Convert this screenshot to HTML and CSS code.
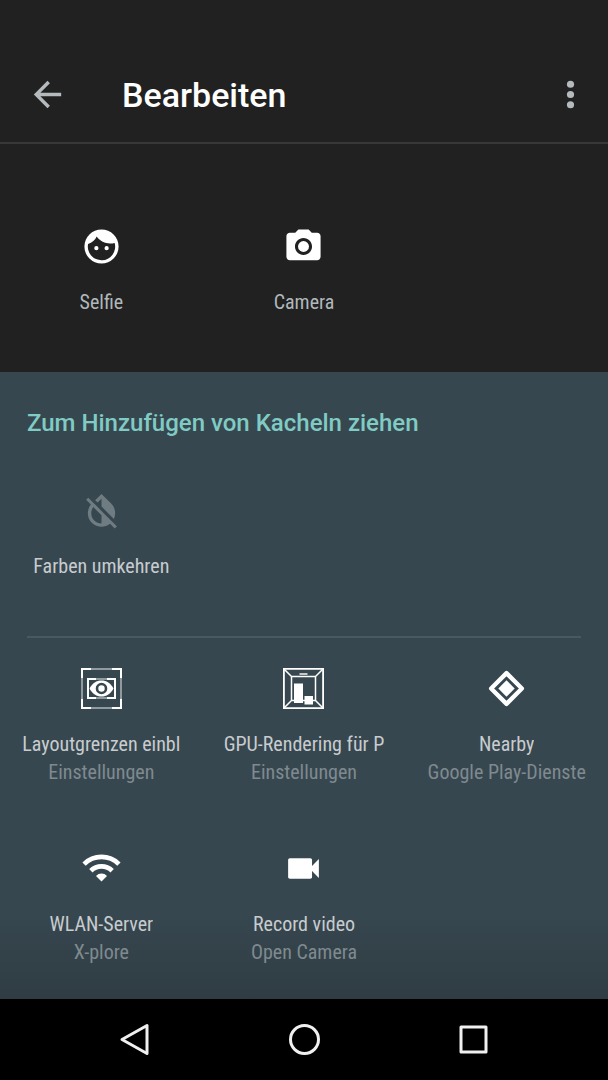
FILE: index.html
```html
<!DOCTYPE html>
<html lang="de">
<head>
<meta charset="utf-8">
<meta name="viewport" content="width=device-width, initial-scale=1">
<title>Bearbeiten</title>
<link rel="stylesheet" href="styles.css">
</head>
<body>
<div class="screen">
  <header class="toolbar">
    <button class="icon-button" type="button" aria-label="Zurück">
      <svg class="icon" viewBox="0 0 24 24"><path d="M20 11H7.830l5.590-5.590L12 4l-8 8 8 8 1.410-1.410L7.830 13H20z"/></svg>
    </button>
    <h1 class="title">Bearbeiten</h1>
    <button class="icon-button" type="button" aria-label="Weitere Optionen">
      <svg class="icon" viewBox="0 0 24 24"><circle cx="12" cy="6" r="2.100"/><circle cx="12" cy="12" r="2.100"/><circle cx="12" cy="18" r="2.100"/></svg>
    </button>
  </header>

  <section class="active tiles">
    <button class="tile" type="button">
      <svg class="icon" viewBox="0 0 24 24"><path fill-rule="evenodd" d="M12 2a10 10 0 1 0 0 20 10 10 0 0 0 0-20zM9.200 6.200C11.100 9 14.100 10.200 17 10.200c.9 0 1.800-.1 2.700-.3A8 8 0 1 1 4.150 10.500C6.500 9.700 8.300 8.300 9.200 6.200zM9 11.750a1.250 1.250 0 1 0 0 2.500 1.250 1.250 0 0 0 0-2.500zM15 11.750a1.250 1.250 0 1 0 0 2.500 1.250 1.250 0 0 0 0-2.500z"/></svg>
      <span class="label">Selfie</span>
    </button>
    <button class="tile" type="button">
      <svg class="icon" viewBox="0 0 24 24"><circle cx="12" cy="12" r="3.200"/><path d="M9 2L7.170 4H4c-1.100 0-2 .9-2 2v12c0 1.100.9 2 2 2h16c1.100 0 2-.9 2-2V6c0-1.100-.9-2-2-2h-3.170L15 2H9zm3 15c-2.760 0-5-2.240-5-5s2.240-5 5-5 5 2.240 5 5-2.240 5-5 5z"/></svg>
      <span class="label">Camera</span>
    </button>
  </section>

  <main class="available">
    <h2 class="hint">Zum Hinzufügen von Kacheln ziehen</h2>
    <div class="tiles">
      <button class="tile" type="button">
        <svg class="icon dim" viewBox="0 0 24 24"><path d="M20.650 20.870l-2.350-2.350-6.300-6.290-3.560-3.570-1.420-1.410L4.270 4.500 3 5.770l2.780 2.780c-2.550 3.140-2.360 7.760.56 10.690C7.900 20.800 9.950 21.580 12 21.580c1.790 0 3.570-.59 5.030-1.780l2.700 2.700L21 21.230l-.35-.36zM12 19.590c-1.600 0-3.110-.62-4.240-1.760C6.620 16.690 6 15.190 6 13.590c0-1.320.43-2.570 1.210-3.600L12 14.770v4.820zM12 5.100v4.580l7.250 7.260c1.370-2.960.84-6.570-1.600-9.010L12 2.270l-3.700 3.700 1.410 1.410L12 5.100z"/></svg>
        <span class="label">Farben umkehren</span>
      </button>
    </div>
    <hr class="divider">
    <div class="tiles">
      <button class="tile" type="button">
        <svg class="icon" viewBox="0 0 41 41"><g fill="none" stroke="#fff" stroke-width="2"><path stroke-opacity=".45" d="M10 1h21M10 40h21M1 10v21M40 10v21M15 11h11M15 30h11"/><path d="M1 10V1h9M31 1h9v9M40 31v9h-9M10 40H1v-9M15 11H7v19h8M26 11h8v19h-8"/></g><path fill-rule="evenodd" d="M8.500 20.500C11.500 15 15.500 12.500 20.500 12.500s9 2.500 12 8c-3 5.500-7 8-12 8s-9-2.500-12-8zM20.500 14.700a5.800 5.800 0 1 0 0 11.600 5.800 5.800 0 0 0 0-11.600zm0 2.600a3.200 3.200 0 1 1 0 6.400 3.200 3.200 0 0 1 0-6.400z"/></svg>
        <span class="label">Layoutgrenzen einbl</span>
        <span class="source">Einstellungen</span>
      </button>
      <button class="tile" type="button">
        <svg class="icon" viewBox="0 0 41 41"><g fill="none" stroke="#fff"><path stroke-width="1.800" d="M.9.900h39.200v39.200H.9z"/><path stroke-width="1.500" d="M8.500 8.500h24v24h-24zM1 1l7.500 7.500M40 1l-7.500 7.500M1 40l7.500-7.500M40 40l-7.500-7.500"/></g><path opacity=".7" d="M16.500 5h8v2h-8z"/><path d="M11 15.500h9V35h-9zM21.500 28H30v8.500h-8.500z"/></svg>
        <span class="label">GPU-Rendering für P</span>
        <span class="source">Einstellungen</span>
      </button>
      <button class="tile" type="button">
        <svg class="icon" viewBox="0 0 40 40"><path fill="none" stroke="#fff" stroke-width="4.200" stroke-linejoin="round" d="M20 5l15 15-15 15L5 20z"/><path d="M20 12l8 8-8 8-8-8z"/></svg>
        <span class="label">Nearby</span>
        <span class="source">Google Play-Dienste</span>
      </button>
      <button class="tile" type="button">
        <svg class="icon" viewBox="0 0 40 40"><g fill="none" stroke="#fff" stroke-width="4.600"><path d="M3 15.700a24.200 24.200 0 0 1 34 0"/><path d="M9.600 22.200a14.900 14.900 0 0 1 20.800 0"/></g><path d="M14.600 27.200a7.700 7.700 0 0 1 10.800 0L20 32.800z"/></svg>
        <span class="label">WLAN-Server</span>
        <span class="source">X-plore</span>
      </button>
      <button class="tile" type="button">
        <svg class="icon" viewBox="0 0 24 24"><path d="M17 10.500V7c0-.55-.45-1-1-1H4c-.55 0-1 .45-1 1v10c0 .55.45 1 1 1h12c.55 0 1-.45 1-1v-3.500l4 4v-11l-4 4z"/></svg>
        <span class="label">Record video</span>
        <span class="source">Open Camera</span>
      </button>
    </div>
  </main>

  <nav class="navbar">
    <button class="nav-button" type="button" aria-label="Zurück">
      <svg class="icon" viewBox="0 0 41 41"><path d="M32 6.500v28L7 20.500z"/></svg>
    </button>
    <button class="nav-button" type="button" aria-label="Startbildschirm">
      <svg class="icon" viewBox="0 0 41 41"><circle cx="20.500" cy="20.500" r="14"/></svg>
    </button>
    <button class="nav-button" type="button" aria-label="Übersicht">
      <svg class="icon" viewBox="0 0 41 41"><path d="M8 8h25v25H8z"/></svg>
    </button>
  </nav>
</div>
</body>
</html>
```
FILE: styles.css
```css
* {
  box-sizing: border-box;
}

body {
  margin: 0;
  background: #212121;
  font-family: Roboto, "Liberation Sans", sans-serif;
}

button {
  margin: 0;
  padding: 0;
  border: 0;
  background: none;
  font: inherit;
  color: inherit;
}

.screen {
  display: flex;
  flex-direction: column;
  min-height: 100vh;
}

.icon {
  display: block;
  width: 41px;
  height: 41px;
  flex: none;
  fill: #fff;
}

.toolbar {
  display: flex;
  align-items: center;
  padding: 73px 17px 27px 27px;
  border-bottom: 2px solid #383838;
}

.icon-button .icon {
  fill: #b5babd;
}

.title {
  flex: 1;
  margin: 0 0 0 54px;
  padding-top: 2px;
  font-size: 34px;
  line-height: 40px;
  font-weight: 500;
  color: #fff;
}

.tiles {
  display: grid;
  grid-template-columns: repeat(3, 1fr);
  row-gap: 62px;
}

.tile {
  display: flex;
  flex-direction: column;
  align-items: center;
  min-width: 0;
  padding: 0 20px;
  font-family: "Roboto Condensed", "Liberation Sans Narrow", Roboto, sans-serif;
  font-size: 20px;
  line-height: 28px;
  white-space: nowrap;
}

.label {
  max-width: 100%;
  margin-top: 21px;
  overflow: hidden;
  color: #c8cccf;
}

.source {
  color: #7f8a90;
}

.active {
  padding: 82px 0 56px;
}

.active .label {
  color: #b0b8bb;
}

.icon.dim {
  fill: #6f7c82;
}

.available {
  flex: 1;
  padding: 37px 0 33px;
  background: linear-gradient(to top, #2f3c43, #37474f 84px);
}

.hint {
  margin: 0 27px 53px;
  font-size: 24px;
  line-height: 28px;
  font-weight: 500;
  color: #80cbc4;
}

.divider {
  height: 2px;
  margin: 56px 27px 30px;
  border: 0;
  background: #4a5960;
}

.navbar {
  display: flex;
  justify-content: center;
  gap: 128px;
  padding: 20px 0;
  background: #000;
}

.nav-button .icon {
  fill: none;
  stroke: #f0f0f0;
  stroke-width: 3;
  stroke-linejoin: round;
}
```
